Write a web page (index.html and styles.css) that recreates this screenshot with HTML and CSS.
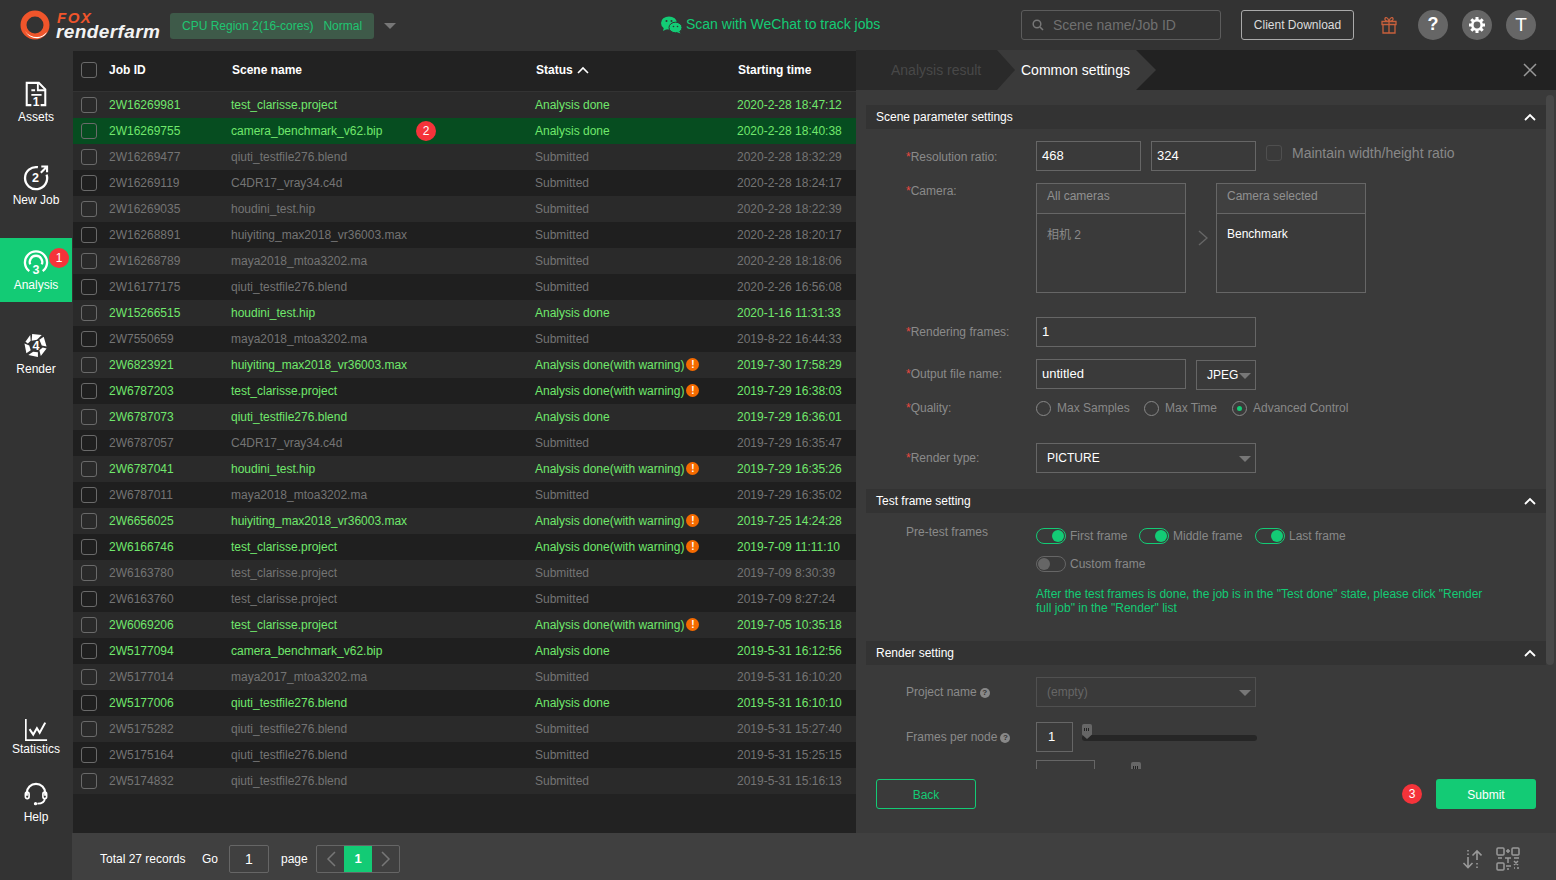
FILE: index.html
```html
<!DOCTYPE html>
<html lang="en">
<head>
<meta charset="utf-8">
<title>Fox Renderfarm</title>
<link rel="stylesheet" href="styles.css">
</head>
<body>
<div class="app">
  <header class="topbar">
    <div class="logo">
      <svg class="logo-mark" width="32" height="32" viewBox="0 0 32 32"><circle cx="16" cy="16" r="11.5" fill="none" stroke="#f0552b" stroke-width="6"/><path d="M6 22c3 5 8 8 14 7 4-1 7-3 8-6-3 3-6 5-10 5-5 0-9-2-12-6z" fill="#fff"/><path d="M9 23c3 3 6 4 10 4-4 1-8 0-10-4z" fill="#f0552b"/></svg>
      <div class="logo-text"><span class="logo-fox">FOX</span><span class="logo-rf">renderfarm</span></div>
    </div>
    <div class="region"><span>CPU Region 2(16-cores)</span><span>Normal</span></div>
    <span class="caret top-caret"></span>
    <div class="scan">
      <svg width="21" height="18" viewBox="0 0 21 18"><ellipse cx="8" cy="7" rx="8" ry="6.6" fill="#13cb75"/><path d="M3 11l-1 4 4-2z" fill="#13cb75"/><ellipse cx="14.5" cy="11.5" rx="6.5" ry="5.3" fill="#13cb75" stroke="#333" stroke-width="1"/><path d="M18 15l1.500 2.500-4-1.500z" fill="#13cb75"/><circle cx="5.500" cy="5" r="1" fill="#333"/><circle cx="10.500" cy="5" r="1" fill="#333"/><circle cx="12.500" cy="10.500" r=".8" fill="#333"/><circle cx="16.500" cy="10.500" r=".8" fill="#333"/></svg>
      <span>Scan with WeChat to track jobs</span>
    </div>
    <div class="search">
      <svg width="12" height="12" viewBox="0 0 12 12"><circle cx="5" cy="5" r="3.800" fill="none" stroke="#777" stroke-width="1.500"/><path d="M8 8l3 3" stroke="#777" stroke-width="1.600"/></svg>
      <span>Scene name/Job ID</span>
    </div>
    <div class="client-btn">Client Download</div>
    <svg class="gift" width="16" height="18" viewBox="0 0 16 18"><path d="M1 5.500h14v3H1zM2 8.500h12V17H2zM8 5.500V17M8 5.500C5 5.500 3.500 4 4 2.500S7 1 8 5.500c1-4.500 3.500-4.500 4-3s-1 3-4 3z" fill="none" stroke="#c8603c" stroke-width="1.300"/></svg>
    <div class="round">?</div>
    <div class="round gear-wrap"><svg width="20" height="20" viewBox="0 0 20 20"><g stroke="#fff" stroke-width="3"><path d="M10 2v3M10 15v3M2 10h3M15 10h3M4.300 4.300l2.100 2.100M13.600 13.600l2.100 2.100M15.700 4.300l-2.100 2.100M6.400 13.600l-2.100 2.100"/></g><circle cx="10" cy="10" r="4.700" fill="#666" stroke="#fff" stroke-width="2.600"/></svg></div>
    <div class="round round-t">T</div>
  </header>

  <div class="body">
    <nav class="sidebar">
      <div class="nav-group">
        <div class="nav-item nav-assets">
          <svg width="26" height="28" viewBox="0 0 26 28"><path d="M8 26H3V2h13l7 7v17h-5" fill="none" stroke="#fff" stroke-width="2.200"/><path d="M15 2v8h8M8 10h4M8 15h11" fill="none" stroke="#fff" stroke-width="2"/><text x="13" y="27" class="nav-digit">1</text></svg>
          <span>Assets</span>
        </div>
        <div class="nav-item">
          <svg width="26" height="26" viewBox="0 0 26 26"><path d="M15 2.300A11.500 11.500 0 1 0 24 10" fill="none" stroke="#fff" stroke-width="2.400"/><path d="M18 8l6-6M18.500 1.500h6v6" fill="none" stroke="#fff" stroke-width="2.200"/><text x="12.500" y="18" class="nav-digit">2</text></svg>
          <span>New Job</span>
        </div>
        <div class="nav-item active">
          <svg width="26" height="26" viewBox="0 0 26 26"><path d="M6 22A11.500 11.500 0 1 1 20 22" fill="none" stroke="#fff" stroke-width="2.400"/><path d="M7 15a6.500 6.500 0 1 1 12 0" fill="none" stroke="#fff" stroke-width="2.400"/><text x="13" y="25" class="nav-digit">3</text></svg>
          <span>Analysis</span>
          <b class="badge nav-badge">1</b>
        </div>
        <div class="nav-item nav-render">
          <svg width="26" height="26" viewBox="0 0 26 26"><path d="M9 1l10 1-5 5-5.500 1zM21 4l3 10-5-1-2.500-6zM24 16l-6 8-1.500-6 3.500-3zM15 25L5 23l5-3.500 5 .5zM3 21L1 11l5 2 1.500 5zM2 9l5-7 .5 6-3 3z" fill="#fff"/><text x="13" y="18" class="nav-digit">4</text></svg>
          <span>Render</span>
        </div>
      </div>
      <div class="nav-group">
        <div class="nav-item nav-stat">
          <svg width="26" height="26" viewBox="0 0 26 26"><path d="M2 1v23h23" fill="none" stroke="#fff" stroke-width="1.800"/><path d="M6 12l4 6 4-7 3 5 6-11" fill="none" stroke="#fff" stroke-width="2.200"/></svg>
          <span>Statistics</span>
        </div>
        <div class="nav-item nav-help">
          <svg width="26" height="26" viewBox="0 0 26 26"><path d="M3 15V12a10 10 0 0 1 20 0v3" fill="none" stroke="#fff" stroke-width="2.400"/><rect x="1.500" y="11" width="4" height="7" rx="2" fill="none" stroke="#fff" stroke-width="1.800"/><rect x="20.500" y="11" width="4" height="7" rx="2" fill="none" stroke="#fff" stroke-width="1.800"/><path d="M22.500 18c0 4-4 5.500-8 5.500" fill="none" stroke="#fff" stroke-width="2"/><circle cx="12.500" cy="23.500" r="1.800" fill="#fff"/></svg>
          <span>Help</span>
        </div>
      </div>
    </nav>

    <div class="content">
      <div class="split">
        <section class="jobs">
          <div class="jobs-head">
            <span class="check"></span>
            <span class="c-id">Job ID</span>
            <span class="c-scene">Scene name</span>
            <span class="c-status">Status <svg width="12" height="8" viewBox="0 0 12 8"><path d="M1 7l5-5 5 5" fill="none" stroke="#fff" stroke-width="1.600"/></svg></span>
            <span class="c-time">Starting time</span>
          </div>
          <div class="row done"><span class="check"></span><span class="c-id">2W16269981</span><span class="c-scene">test_clarisse.project</span><span class="c-status">Analysis done</span><span class="c-time">2020-2-28 18:47:12</span></div>
          <div class="row done selected"><span class="check"></span><span class="c-id">2W16269755</span><span class="c-scene">camera_benchmark_v62.bip<b class="badge row-badge">2</b></span><span class="c-status">Analysis done</span><span class="c-time">2020-2-28 18:40:38</span></div>
          <div class="row"><span class="check"></span><span class="c-id">2W16269477</span><span class="c-scene">qiuti_testfile276.blend</span><span class="c-status">Submitted</span><span class="c-time">2020-2-28 18:32:29</span></div>
          <div class="row"><span class="check"></span><span class="c-id">2W16269119</span><span class="c-scene">C4DR17_vray34.c4d</span><span class="c-status">Submitted</span><span class="c-time">2020-2-28 18:24:17</span></div>
          <div class="row"><span class="check"></span><span class="c-id">2W16269035</span><span class="c-scene">houdini_test.hip</span><span class="c-status">Submitted</span><span class="c-time">2020-2-28 18:22:39</span></div>
          <div class="row"><span class="check"></span><span class="c-id">2W16268891</span><span class="c-scene">huiyiting_max2018_vr36003.max</span><span class="c-status">Submitted</span><span class="c-time">2020-2-28 18:20:17</span></div>
          <div class="row"><span class="check"></span><span class="c-id">2W16268789</span><span class="c-scene">maya2018_mtoa3202.ma</span><span class="c-status">Submitted</span><span class="c-time">2020-2-28 18:18:06</span></div>
          <div class="row"><span class="check"></span><span class="c-id">2W16177175</span><span class="c-scene">qiuti_testfile276.blend</span><span class="c-status">Submitted</span><span class="c-time">2020-2-26 16:56:08</span></div>
          <div class="row done"><span class="check"></span><span class="c-id">2W15266515</span><span class="c-scene">houdini_test.hip</span><span class="c-status">Analysis done</span><span class="c-time">2020-1-16 11:31:33</span></div>
          <div class="row"><span class="check"></span><span class="c-id">2W7550659</span><span class="c-scene">maya2018_mtoa3202.ma</span><span class="c-status">Submitted</span><span class="c-time">2019-8-22 16:44:33</span></div>
          <div class="row done"><span class="check"></span><span class="c-id">2W6823921</span><span class="c-scene">huiyiting_max2018_vr36003.max</span><span class="c-status">Analysis done(with warning)<i class="warn">!</i></span><span class="c-time">2019-7-30 17:58:29</span></div>
          <div class="row done"><span class="check"></span><span class="c-id">2W6787203</span><span class="c-scene">test_clarisse.project</span><span class="c-status">Analysis done(with warning)<i class="warn">!</i></span><span class="c-time">2019-7-29 16:38:03</span></div>
          <div class="row done"><span class="check"></span><span class="c-id">2W6787073</span><span class="c-scene">qiuti_testfile276.blend</span><span class="c-status">Analysis done</span><span class="c-time">2019-7-29 16:36:01</span></div>
          <div class="row"><span class="check"></span><span class="c-id">2W6787057</span><span class="c-scene">C4DR17_vray34.c4d</span><span class="c-status">Submitted</span><span class="c-time">2019-7-29 16:35:47</span></div>
          <div class="row done"><span class="check"></span><span class="c-id">2W6787041</span><span class="c-scene">houdini_test.hip</span><span class="c-status">Analysis done(with warning)<i class="warn">!</i></span><span class="c-time">2019-7-29 16:35:26</span></div>
          <div class="row"><span class="check"></span><span class="c-id">2W6787011</span><span class="c-scene">maya2018_mtoa3202.ma</span><span class="c-status">Submitted</span><span class="c-time">2019-7-29 16:35:02</span></div>
          <div class="row done"><span class="check"></span><span class="c-id">2W6656025</span><span class="c-scene">huiyiting_max2018_vr36003.max</span><span class="c-status">Analysis done(with warning)<i class="warn">!</i></span><span class="c-time">2019-7-25 14:24:28</span></div>
          <div class="row done"><span class="check"></span><span class="c-id">2W6166746</span><span class="c-scene">test_clarisse.project</span><span class="c-status">Analysis done(with warning)<i class="warn">!</i></span><span class="c-time">2019-7-09 11:11:10</span></div>
          <div class="row"><span class="check"></span><span class="c-id">2W6163780</span><span class="c-scene">test_clarisse.project</span><span class="c-status">Submitted</span><span class="c-time">2019-7-09 8:30:39</span></div>
          <div class="row"><span class="check"></span><span class="c-id">2W6163760</span><span class="c-scene">test_clarisse.project</span><span class="c-status">Submitted</span><span class="c-time">2019-7-09 8:27:24</span></div>
          <div class="row done"><span class="check"></span><span class="c-id">2W6069206</span><span class="c-scene">test_clarisse.project</span><span class="c-status">Analysis done(with warning)<i class="warn">!</i></span><span class="c-time">2019-7-05 10:35:18</span></div>
          <div class="row done"><span class="check"></span><span class="c-id">2W5177094</span><span class="c-scene">camera_benchmark_v62.bip</span><span class="c-status">Analysis done</span><span class="c-time">2019-5-31 16:12:56</span></div>
          <div class="row"><span class="check"></span><span class="c-id">2W5177014</span><span class="c-scene">maya2017_mtoa3202.ma</span><span class="c-status">Submitted</span><span class="c-time">2019-5-31 16:10:20</span></div>
          <div class="row done"><span class="check"></span><span class="c-id">2W5177006</span><span class="c-scene">qiuti_testfile276.blend</span><span class="c-status">Analysis done</span><span class="c-time">2019-5-31 16:10:10</span></div>
          <div class="row"><span class="check"></span><span class="c-id">2W5175282</span><span class="c-scene">qiuti_testfile276.blend</span><span class="c-status">Submitted</span><span class="c-time">2019-5-31 15:27:40</span></div>
          <div class="row"><span class="check"></span><span class="c-id">2W5175164</span><span class="c-scene">qiuti_testfile276.blend</span><span class="c-status">Submitted</span><span class="c-time">2019-5-31 15:25:15</span></div>
          <div class="row"><span class="check"></span><span class="c-id">2W5174832</span><span class="c-scene">qiuti_testfile276.blend</span><span class="c-status">Submitted</span><span class="c-time">2019-5-31 15:16:13</span></div>
        </section>

        <section class="panel">
          <div class="tabs">
            <div class="tab tab-off">Analysis result</div>
            <div class="tab tab-on">Common settings</div>
            <svg class="close" width="14" height="14" viewBox="0 0 14 14"><path d="M1 1l12 12M13 1L1 13" stroke="#999" stroke-width="1.500"/></svg>
          </div>
          <div class="scrollbar"></div>
          <div class="scroll">
            <div class="sec-head first"><span>Scene parameter settings</span><svg width="12" height="8" viewBox="0 0 12 8"><path d="M1 7l5-5 5 5" fill="none" stroke="#fff" stroke-width="1.800"/></svg></div>
            <div class="form">
              <div class="f-row r-res">
                <label><em>*</em>Resolution ratio:</label>
                <div class="field w105">468</div>
                <div class="field w105 ml10">324</div>
                <div class="keep"><span class="check dim"></span><span>Maintain width/height ratio</span></div>
              </div>
              <div class="f-row r-cam">
                <label class="top"><em>*</em>Camera:</label>
                <div class="cam-box"><div class="cam-head">All cameras</div><div class="cam-item muted">相机 2</div></div>
                <svg class="cam-arrow" width="10" height="16" viewBox="0 0 10 16"><path d="M1 1l8 7-8 7" fill="none" stroke="#666" stroke-width="1.500"/></svg>
                <div class="cam-box"><div class="cam-head">Camera selected</div><div class="cam-item">Benchmark</div></div>
              </div>
              <div class="f-row r-frames">
                <label><em>*</em>Rendering frames:</label>
                <div class="field w220">1</div>
              </div>
              <div class="f-row r-out">
                <label><em>*</em>Output file name:</label>
                <div class="field w150">untitled</div>
                <div class="field jpeg">JPEG<span class="caret jpeg-caret"></span></div>
              </div>
              <div class="f-row r-qual">
                <label><em>*</em>Quality:</label>
                <div class="radios">
                  <span class="radio"></span><span class="r-text r1">Max Samples</span>
                  <span class="radio"></span><span class="r-text r2">Max Time</span>
                  <span class="radio on"></span><span class="r-text">Advanced Control</span>
                </div>
              </div>
              <div class="f-row r-type">
                <label><em>*</em>Render type:</label>
                <div class="field w220 sel pad">PICTURE<span class="caret"></span></div>
              </div>
            </div>

            <div class="sec-head"><span>Test frame setting</span><svg width="12" height="8" viewBox="0 0 12 8"><path d="M1 7l5-5 5 5" fill="none" stroke="#fff" stroke-width="1.800"/></svg></div>
            <div class="form form-test">
              <div class="f-row">
                <label class="top tight">Pre-test frames</label>
                <div class="toggles">
                  <div class="t-line">
                    <span class="toggle on"></span><span class="t-text t1">First frame</span>
                    <span class="toggle on"></span><span class="t-text t2">Middle frame</span>
                    <span class="toggle on"></span><span class="t-text">Last frame</span>
                  </div>
                  <div class="t-line t-second"><span class="toggle"></span><span class="t-text">Custom frame</span></div>
                  <p class="note">After the test frames is done, the job is in the "Test done" state, please click "Render full job" in the "Render" list</p>
                </div>
              </div>
            </div>

            <div class="sec-head"><span>Render setting</span><svg width="12" height="8" viewBox="0 0 12 8"><path d="M1 7l5-5 5 5" fill="none" stroke="#fff" stroke-width="1.800"/></svg></div>
            <div class="form form-render">
              <div class="f-row">
                <label>Project name<i class="help">?</i></label>
                <div class="field w220 sel pad empty">(empty)<span class="caret"></span></div>
              </div>
              <div class="f-row r-node">
                <label>Frames per node<i class="help">?</i></label>
                <div class="field w37 one">1</div>
                <div class="slider"><span class="handle"></span></div>
              </div>
              <div class="f-row r-next">
                <label></label>
                <div class="field w59"></div>
                <span class="handle next-handle"></span>
              </div>
            </div>
          </div>
          <div class="actions">
            <div class="btn-back">Back</div>
            <b class="badge act-badge">3</b>
            <div class="btn-submit">Submit</div>
          </div>
        </section>
      </div>

      <footer class="pager-bar">
        <span class="total">Total 27 records</span>
        <span class="go">Go</span>
        <div class="go-input">1</div>
        <span class="page-word">page</span>
        <div class="pager">
          <span class="pg"><svg width="10" height="16" viewBox="0 0 10 16"><path d="M9 1L2 8l7 7" fill="none" stroke="#777" stroke-width="1.500"/></svg></span>
          <span class="pg cur">1</span>
          <span class="pg"><svg width="10" height="16" viewBox="0 0 10 16"><path d="M1 1l7 7-7 7" fill="none" stroke="#777" stroke-width="1.500"/></svg></span>
        </div>
        <svg class="foot-icon" width="20" height="20" viewBox="0 0 20 20"><path d="M6 8v10M1.500 14l4.500 4.500 4.500-4.500M15 11V2M10.500 6.500L15 2l4.500 4.500" fill="none" stroke="#999" stroke-width="1.600"/><path d="M6 1v1.500M6 4.500V6M15 14v1.500M15 17.500V19" stroke="#999" stroke-width="1.600"/></svg>
        <svg class="foot-icon qr" width="24" height="24" viewBox="0 0 24 24"><g fill="none" stroke="#999" stroke-width="1.500"><rect x="1" y="1" width="7" height="7" rx="1"/><rect x="16" y="1" width="7" height="7" rx="1"/><rect x="1" y="16" width="7" height="7" rx="1"/><path d="M10 4h4M12 2v4M2 11h4M9 11h6M12 11v5M18 11h5M10 19h5M11 22h2M18 14l4 4M22 14l-4 4M18 21h1M21 21h2"/></g></svg>
      </footer>
    </div>
  </div>
</div>
</body>
</html>
```
FILE: styles.css
```css
* { box-sizing: border-box; }
html, body { margin: 0; padding: 0; }
body {
  width: 1556px;
  height: 880px;
  overflow: hidden;
  background: #333;
  color: #fff;
  font: 12px/1.2 "Liberation Sans", Arial, "Noto Sans CJK SC", sans-serif;
}
.app { display: flex; flex-direction: column; height: 880px; }

/* top bar */
.topbar { flex: 0 0 50px; display: flex; align-items: center; background: #333; }
.logo { display: flex; align-items: center; width: 170px; padding-left: 19px; }
.logo-mark { flex: none; }
.logo-text { display: flex; flex-direction: column; margin-left: 6px; font-style: italic; font-weight: 700; line-height: 13px; }
.logo-fox { color: #f0552b; font-size: 15px; letter-spacing: 1.500px; }
.logo-rf { color: #f2f2f2; font-size: 19px; letter-spacing: .4px; line-height: 15px; margin-left: -1px; }
.region { width: 204px; height: 26px; margin-top: 2px; display: flex; align-items: center; gap: 10px; padding-left: 12px; border-radius: 3px; background: #3e5a49; color: #1fc672; }
.caret { display: inline-block; width: 0; height: 0; border-style: solid; border-width: 6px 6px 0; border-color: #777 transparent transparent; }
.top-caret { margin-left: 10px; margin-top: 2px; }
.scan { display: flex; align-items: center; gap: 4px; margin-left: 265px; margin-top: -1px; width: 360px; font-size: 14px; color: #13cb75; }
.search { display: flex; align-items: center; gap: 9px; width: 200px; height: 30px; padding-left: 10px; border: 1px solid #5c5c5c; border-radius: 3px; font-size: 14px; color: #707070; }
.client-btn { width: 113px; height: 30px; margin-left: 20px; border: 1px solid #aaa; border-radius: 3px; line-height: 28px; text-align: center; color: #ddd; }
.gift { margin-left: 27px; }
.round { display: flex; align-items: center; justify-content: center; width: 30px; height: 30px; margin-left: 14px; border-radius: 50%; background: #666; font-size: 18px; font-weight: 700; }
.gift + .round { margin-left: 21px; }
.round-t { font-weight: 400; font-size: 19px; }

/* body layout */
.body { flex: 1; display: flex; min-height: 0; }
.sidebar { flex: 0 0 72px; display: flex; flex-direction: column; justify-content: space-between; padding: 20px 0 46px; background: #333; }
.nav-item { position: relative; display: flex; flex-direction: column; align-items: center; height: 64px; margin-bottom: 20px; padding-top: 11px; }
.nav-item svg { flex: none; height: 25px; overflow: visible; }
.nav-item span { margin-top: 3px; line-height: 14px; }
.nav-assets svg { height: 26px; }
.nav-item.active { background: #13cb75; padding-top: 12px; }
.nav-render span { margin-top: 4px; }
.nav-group:last-child .nav-item { margin-bottom: 4px; }
.nav-group:last-child .nav-item:last-child { margin-bottom: 0; }
.nav-stat { padding-top: 16px; }
.nav-stat svg, .nav-help svg { height: 24px; }
.nav-stat span { margin-top: 0; }
.nav-help { padding-top: 12px; }
.nav-help span { margin-top: 4px; }
.nav-digit { font: 700 13px "Liberation Sans", Arial, sans-serif; fill: #fff; text-anchor: middle; }
.badge { display: flex; align-items: center; justify-content: center; width: 20px; height: 20px; border-radius: 50%; background: #f5333a; color: #fff; font-weight: 400; font-size: 12px; }
.nav-badge { position: absolute; left: 49px; top: 10px; }

.content { flex: 1; display: flex; flex-direction: column; min-width: 0; }
.split { flex: 1; display: flex; min-height: 0; }

/* jobs table */
.jobs { flex: 0 0 784px; background: #222; border-left: 1px solid #333; border-top: 1px solid #333; }
.jobs-head, .row { display: flex; align-items: center; padding-left: 8px; }
.jobs-head { height: 41px; padding-bottom: 2px; border-bottom: 1px solid #333; font-weight: 700; }
.row { height: 26px; color: #747474; }
.row:nth-child(even) { background: #2a2a2a; }
.row:nth-child(odd) { background: #1f1f1f; }
.row.done { color: #70e86c; }
.row.selected { background: #064d20; }
.check { flex: none; width: 16px; height: 16px; margin-right: 12px; border: 1px solid #6a6a6a; border-radius: 3px; }
.c-id { flex: 0 0 122px; }
.c-scene { flex: 0 0 304px; position: relative; }
.c-status { flex: 0 0 202px; display: flex; align-items: center; gap: 4px; }
.row .c-status { gap: 2px; }
.jobs-head .c-scene { padding-left: 1px; }
.jobs-head .c-status { padding-left: 1px; }
.jobs-head .c-time { padding-left: 1px; }
.row-badge { position: absolute; left: 185px; top: -3px; }
.warn { display: flex; align-items: center; justify-content: center; width: 13px; height: 13px; border-radius: 50%; background: #f56a00; color: #fff; font-style: normal; font-weight: 700; font-size: 10px; }

/* settings panel */
.panel { position: relative; flex: 1; display: flex; flex-direction: column; background: #3a3a3a; min-width: 0; }
.tabs { flex: 0 0 40px; display: flex; position: relative; background: #222; font-size: 14px; }
.tab { display: flex; align-items: center; height: 40px; }
.tab-off { position: relative; z-index: 1; width: 159px; margin-right: -18px; padding-left: 35px; background: #2a2a2a; color: #484848; clip-path: polygon(0 0, 141px 0, 159px 50%, 141px 100%, 0 100%); }
.tab-on { width: 159px; padding-left: 24px; background: #3a3a3a; clip-path: polygon(0 0, 139px 0, 159px 50%, 139px 100%, 0 100%); }
.close { position: absolute; right: 19px; top: 13px; }
.scrollbar { position: absolute; left: 690px; top: 45px; width: 8px; height: 570px; border-radius: 4px; background: #484848; }
.scroll { flex: 1; overflow: hidden; min-height: 0; }
.sec-head { display: flex; align-items: center; justify-content: space-between; width: 680px; height: 24px; margin-left: 10px; padding: 0 10px; background: #333; }
.sec-head.first { margin-top: 15px; }
.form { padding-left: 50px; }
.f-row { display: flex; align-items: center; }
.f-row label { flex: 0 0 130px; color: #8a8a8a; }
.f-row label.top { align-self: flex-start; padding-top: 1px; }
.f-row label.tight { padding-top: 0; margin-top: -3px; }
.f-row label em { font-style: normal; color: #e8483f; }
.r-res { padding-top: 12px; }
.r-res label { padding-top: 2px; }
.r-cam { padding-top: 12px; }
.r-frames { padding-top: 24px; }
.r-out { padding-top: 12px; }
.r-qual { padding-top: 9px; height: 29px; }
.r-type { padding-top: 25px; padding-bottom: 16px; }
.field { flex: none; height: 30px; padding-left: 5px; border: 1px solid #666; line-height: 28px; font-size: 13px; color: #fff; position: relative; }
.w105 { width: 105px; }
.ml10 { margin-left: 10px; }
.w220 { width: 220px; }
.w150 { width: 150px; }
.w37 { width: 37px; }
.w59 { width: 59px; }
.one { padding-left: 11px; }
.pad { padding-left: 10px; }
.sel { font-size: 12px; }
.sel .caret { position: absolute; right: 4px; top: 12px; }
.empty { border-color: #505050; color: #666; }
.jpeg { width: 60px; margin-left: 10px; margin-top: 1px; margin-bottom: -1px; padding-left: 10px; font-size: 12px; }
.jpeg-caret { position: absolute; right: 4px; top: 12px; }
.keep { display: flex; align-items: center; height: 24px; margin-left: 10px; align-self: flex-start; font-size: 14px; color: #888; }
.check.dim { border-color: #4f4f4f; margin-right: 10px; }
.cam-box { flex: none; width: 150px; height: 110px; border: 1px solid #666; }
.cam-head { height: 30px; padding-left: 10px; border-bottom: 1px solid #666; background: #404040; line-height: 25px; color: #909090; }
.cam-item { padding: 13px 0 0 10px; }
.cam-item.muted { color: #8a8a8a; padding-top: 14px; }
.cam-arrow { margin: 0 8px 0 12px; }
.radios { display: flex; align-items: center; color: #888; }
.radio { flex: none; width: 15px; height: 15px; margin-right: 6px; border: 1px solid #888; border-radius: 50%; position: relative; }
.radio.on::after { content: ""; position: absolute; left: 4px; top: 4px; width: 5px; height: 5px; border-radius: 50%; background: #13cb75; }
.r1 { width: 87px; }
.r2 { width: 67px; }
.form-test { padding-bottom: 26px; padding-top: 15px; }
.form-test .f-row { align-items: flex-start; }
.toggles { flex: 1; }
.t-line { display: flex; align-items: center; height: 16px; color: #888; }
.t-second { margin-top: 12px; }
.toggle { flex: none; position: relative; width: 30px; height: 16px; margin-right: 4px; border: 1px solid #666; border-radius: 8px; }
.toggle::after { content: ""; position: absolute; left: 1px; top: 1px; width: 12px; height: 12px; border-radius: 50%; background: #666; }
.toggle.on { border-color: #13cb75; }
.toggle.on::after { left: auto; right: 1px; background: #13cb75; }
.t1 { width: 69px; }
.t2 { width: 82px; }
.note { margin: 15px 0 0; width: 460px; line-height: 14px; color: #13cb75; }
.form-render { padding-top: 12px; }
.help { display: inline-block; width: 10px; height: 10px; margin-left: 3px; border-radius: 50%; background: #888; color: #333; font-style: normal; font-weight: 700; font-size: 8px; line-height: 10px; text-align: center; vertical-align: 1px; }
.r-node { padding-top: 15px; }
.slider { position: relative; width: 175px; height: 6px; margin-left: 9px; margin-top: 2px; border-radius: 3px; background: #262626; }
.handle { display: block; width: 10px; height: 15px; border-radius: 2px 2px 0 0; background: radial-gradient(circle, #222 0 .7px, transparent .8px) 2px 3px / 2px 2px no-repeat, #666; background: linear-gradient(#666, #666); clip-path: polygon(0 0, 100% 0, 100% 70%, 50% 100%, 0 70%); position: relative; }
.handle::after { content: ""; position: absolute; left: 2px; top: 4px; width: 6px; height: 3px; background: repeating-linear-gradient(90deg, #222 0 1px, transparent 1px 2px); }
.slider .handle { position: absolute; left: 0; top: -11px; }
.r-next { padding-top: 8px; }
.next-handle { align-self: flex-start; margin-left: 36px; margin-top: 2px; }
.actions { flex: 0 0 64px; display: flex; align-items: flex-start; padding: 10px 20px 0; background: #3a3a3a; position: relative; }
.btn-back { width: 100px; height: 30px; border: 1px solid #13cb75; border-radius: 3px; line-height: 30px; text-align: center; color: #13cb75; }
.act-badge { margin-left: auto; margin-top: 5px; margin-right: 14px; }
.btn-submit { width: 100px; height: 30px; border-radius: 3px; background: #13cb75; line-height: 32px; text-align: center; color: #fff; }

/* footer */
.pager-bar { flex: 0 0 47px; display: flex; align-items: center; padding: 5px 0 0 28px; background: #404040; }
.total { width: 102px; }
.go { width: 27px; }
.go-input { width: 40px; height: 28px; border: 1px solid #666; border-radius: 2px; line-height: 26px; text-align: center; font-size: 14px; }
.page-word { margin-left: 12px; width: 35px; }
.pager { display: flex; width: 84px; height: 28px; border: 1px solid #666; border-radius: 2px; }
.pg { flex: 1; display: flex; align-items: center; justify-content: center; }
.pg.cur { flex: 0 0 28px; background: #13cb75; font-size: 13px; font-weight: 700; }
.foot-icon { margin-left: 1062px; }
.foot-icon.qr { margin-left: 14px; }
```
